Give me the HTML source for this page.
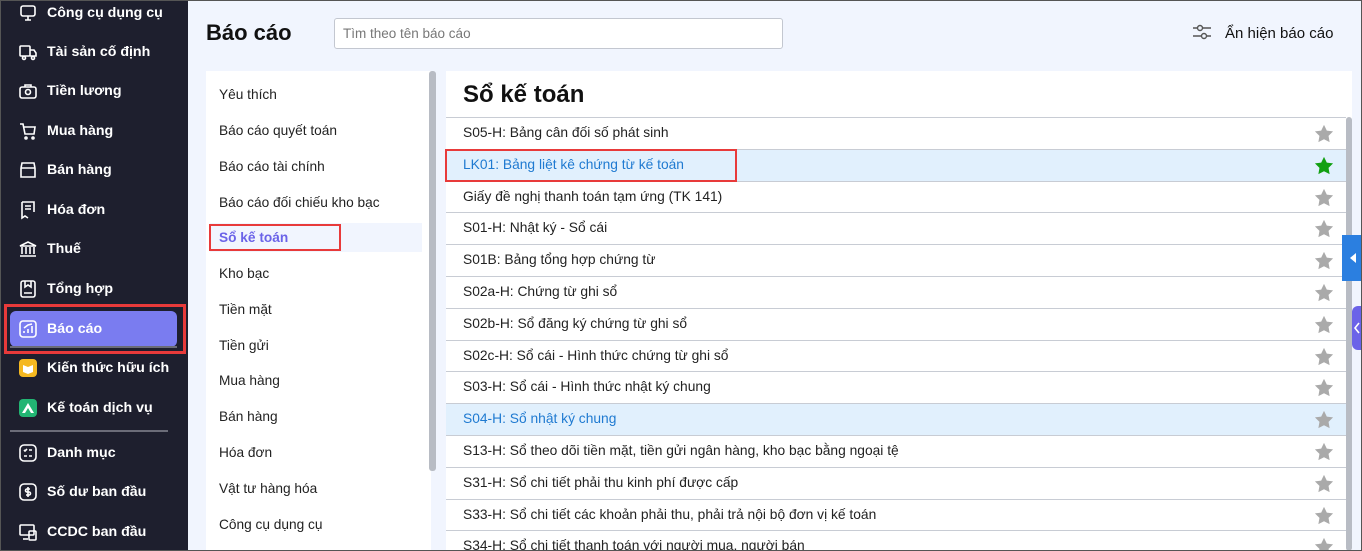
<!DOCTYPE html>
<html style="overflow:hidden"><head><meta charset="utf-8"><style>
*{box-sizing:border-box;margin:0;padding:0}
html,body{width:1362px;height:551px;overflow:hidden}
body{background:#f1f5fe;font-family:"Liberation Sans",sans-serif;position:relative}
.sb{position:absolute;left:0;top:0;width:188px;height:551px;background:#1e1f2e;color:#fff}
.it{position:absolute;left:18px;height:24px;display:flex;align-items:center;font-size:14.2px;font-weight:bold}
.it svg{width:20px;height:20px;margin-right:9px;flex:none}
.act{position:absolute;left:10px;top:311px;width:167px;height:36px;background:#7a7cf0;border-radius:6px}
.sep{position:absolute;height:2px;background:#6b6c78}
.lp{position:absolute;left:206px;top:71px;width:225px;height:480px;background:#fff}
.lp div{position:absolute;left:13px;font-size:13.7px;color:#222}
.rp{position:absolute;left:446px;top:71px;width:906px;height:480px;background:#fff}
.row{position:absolute;left:0;width:900px;height:32px;border-top:1px solid #c8ccd4;font-size:13.8px;color:#222;padding:7px 0 0 17px}
.row.h{background:#e1f0fd;color:#1f7ad1}
.row svg{position:absolute;right:12px;top:6px}
</style></head><body>
<div class="sb">
<div class="act"></div>
<div style="position:absolute;left:4px;top:304px;width:182px;height:50px;border:3px solid #e83a3a"></div>
<div class="sep" style="left:10px;top:346px;width:167px"></div>
<div class="sep" style="left:10px;top:430px;width:158px"></div>
<div class="it" style="top:1px"><svg viewBox="0 0 20 20" fill="none" stroke="#fff" stroke-width="1.6"><rect x="3" y="3" width="14" height="10" rx="2"/><path d="M10 13v4M7 17h6"/></svg>Công cụ dụng cụ</div>
<div class="it" style="top:40px"><svg viewBox="0 0 20 20" fill="none" stroke="#fff" stroke-width="1.6"><rect x="2" y="4" width="10" height="10" rx="1"/><path d="M12 8h4l2 3v3h-6"/><circle cx="6" cy="16" r="1.5"/><circle cx="15" cy="16" r="1.5"/></svg>Tài sản cố định</div>
<div class="it" style="top:79px"><svg viewBox="0 0 20 20" fill="none" stroke="#fff" stroke-width="1.6"><rect x="2" y="6" width="16" height="11" rx="2"/><path d="M7 6V4h6v2"/><circle cx="10" cy="11" r="2.5"/></svg>Tiền lương</div>
<div class="it" style="top:119px"><svg viewBox="0 0 20 20" fill="none" stroke="#fff" stroke-width="1.6"><path d="M2 3h3l2 10h9l1-7H6"/><circle cx="8" cy="17" r="1"/><circle cx="15" cy="17" r="1"/></svg>Mua hàng</div>
<div class="it" style="top:158px"><svg viewBox="0 0 20 20" fill="none" stroke="#fff" stroke-width="1.6"><path d="M3 8l1-5h12l1 5M3 8v9h14V8M3 8h14"/></svg>Bán hàng</div>
<div class="it" style="top:198px"><svg viewBox="0 0 20 20" fill="none" stroke="#fff" stroke-width="1.6"><path d="M4 2h12v10M4 2v16l3-2 3 2M7 6h6M7 9h6"/></svg>Hóa đơn</div>
<div class="it" style="top:237px"><svg viewBox="0 0 20 20" fill="none" stroke="#fff" stroke-width="1.6"><path d="M2 7l8-4 8 4zM4 8v7M8 8v7M12 8v7M16 8v7M2 17h16"/></svg>Thuế</div>
<div class="it" style="top:277px"><svg viewBox="0 0 20 20" fill="none" stroke="#fff" stroke-width="1.6"><rect x="3" y="2" width="14" height="16" rx="2"/><path d="M7 2v6l3-2 3 2V2M6 14h8"/></svg>Tổng hợp</div>
<div class="it" style="top:317px"><svg viewBox="0 0 20 20" fill="none" stroke="#fff" stroke-width="1.6"><rect x="2" y="2" width="16" height="16" rx="3"/><path d="M6 14v-2M10 14v-4M14 14V7M6 9l4-3 4-1"/></svg>Báo cáo</div>
<div class="it" style="top:356px"><svg viewBox="0 0 20 20"><rect x="1" y="1" width="18" height="18" rx="4" fill="#f5b820"/><path d="M5 7l5 2 5-2v7l-5 2-5-2z" fill="#fff"/></svg>Kiến thức hữu ích</div>
<div class="it" style="top:396px"><svg viewBox="0 0 20 20"><rect x="1" y="1" width="18" height="18" rx="4" fill="#22b573"/><path d="M4 15l6-10 6 10h-3l-3-5-3 5z" fill="#fff"/></svg>Kế toán dịch vụ</div>
<div class="it" style="top:441px"><svg viewBox="0 0 20 20" fill="none" stroke="#fff" stroke-width="1.6"><rect x="2" y="2" width="16" height="16" rx="4"/><path d="M6 7l1 1 2-2M11 7h3M6 13h3M11 13h3"/></svg>Danh mục</div>
<div class="it" style="top:480px"><svg viewBox="0 0 20 20" fill="none" stroke="#fff" stroke-width="1.6"><rect x="2" y="2" width="16" height="16" rx="4"/><path d="M12 7h-3a1.5 1.5 0 000 3h2a1.5 1.5 0 010 3H8M10 5v10"/></svg>Số dư ban đầu</div>
<div class="it" style="top:520px"><svg viewBox="0 0 20 20" fill="none" stroke="#fff" stroke-width="1.6"><rect x="2" y="3" width="14" height="10" rx="1"/><rect x="11" y="9" width="7" height="9" rx="1"/><path d="M5 17h5"/></svg>CCDC ban đầu</div>
</div>

<div style="position:absolute;left:206px;top:20px;font-size:22px;font-weight:bold;color:#111">Báo cáo</div>
<div style="position:absolute;left:334px;top:18px;width:449px;height:31px;background:#fff;border:1px solid #c3c7d0;border-radius:3px;font-size:13.5px;color:#777;padding:7px 8px">Tìm theo tên báo cáo</div>
<svg style="position:absolute;left:1192px;top:24px" width="20" height="16" viewBox="0 0 20 16" fill="none" stroke="#555" stroke-width="1.4"><path d="M1 4h4M11 4h8M1 12h8M15 12h4"/><circle cx="8" cy="4" r="2.5"/><circle cx="12" cy="12" r="2.5"/></svg>
<div style="position:absolute;left:1225px;top:25px;font-size:15px;color:#111">Ẩn hiện báo cáo</div>

<div class="lp">
<div style="top:16px">Yêu thích</div>
<div style="top:52px">Báo cáo quyết toán</div>
<div style="top:88px">Báo cáo tài chính</div>
<div style="top:124px">Báo cáo đối chiếu kho bạc</div>
<div style="left:4px;top:152px;width:212px;height:29px;background:#f1f5fe"></div>
<div style="left:3px;top:153px;width:132px;height:27px;border:2px solid #e83a3a"></div>
<div style="top:159px;font-weight:bold;color:#6b63e8">Sổ kế toán</div>
<div style="top:195px">Kho bạc</div>
<div style="top:231px">Tiền mặt</div>
<div style="top:267px">Tiền gửi</div>
<div style="top:302px">Mua hàng</div>
<div style="top:338px">Bán hàng</div>
<div style="top:374px">Hóa đơn</div>
<div style="top:410px">Vật tư hàng hóa</div>
<div style="top:446px">Công cụ dụng cụ</div>
<div style="left:223px;top:0;width:7px;height:400px;background:#b8bcc4;border-radius:3px"></div>
</div>

<div class="rp">
<div style="position:absolute;left:17px;top:10px;font-size:24px;font-weight:bold;color:#111">Sổ kế toán</div>
<div style="position:absolute;left:900px;top:46px;width:6px;height:434px;background:#b8bcc4;border-radius:3px"></div>
</div>
<div id="rows" style="position:absolute;left:446px;top:117px"></div>
<div style="position:absolute;left:445px;top:149px;width:292px;height:33px;border:2px solid #e83a3a"></div>
<div style="position:absolute;left:1342px;top:235px;width:20px;height:46px;background:#2b7fe0"></div>
<svg style="position:absolute;left:1350px;top:253px" width="6" height="10"><path d="M6 0v10L0 5z" fill="#fff"/></svg>
<div style="position:absolute;left:1352px;top:306px;width:10px;height:44px;background:#6b63e8;border-radius:6px 0 0 6px"></div>
<svg style="position:absolute;left:1353px;top:321px" width="8" height="14"><path d="M6 2L2 7l4 5" stroke="#fff" stroke-width="1.6" fill="none"/></svg>
<div style="position:absolute;left:0;top:0;width:1362px;height:551px;border:1px solid #555;pointer-events:none"></div>
<script>
var r=["S05-H: Bảng cân đối số phát sinh","LK01: Bảng liệt kê chứng từ kế toán","Giấy đề nghị thanh toán tạm ứng (TK 141)","S01-H: Nhật ký - Sổ cái","S01B: Bảng tổng hợp chứng từ","S02a-H: Chứng từ ghi sổ","S02b-H: Sổ đăng ký chứng từ ghi sổ","S02c-H: Sổ cái - Hình thức chứng từ ghi sổ","S03-H: Sổ cái - Hình thức nhật ký chung","S04-H: Sổ nhật ký chung","S13-H: Sổ theo dõi tiền mặt, tiền gửi ngân hàng, kho bạc bằng ngoại tệ","S31-H: Sổ chi tiết phải thu kinh phí được cấp","S33-H: Sổ chi tiết các khoản phải thu, phải trả nội bộ đơn vị kế toán","S34-H: Sổ chi tiết thanh toán với người mua, người bán"];
var h="";r.forEach(function(t,i){var hl=(i==1||i==9);var c=i==1?"#12a012":"#aaa";h+='<div class="row'+(hl?' h':'')+'" style="top:'+(i*31.8)+'px">'+t+'<svg width="20" height="19" viewBox="0 0 24 23"><path d="M12 1l3.4 7 7.6 1-5.5 5.3 1.3 7.7L12 18.4 5.2 22l1.3-7.7L1 9l7.6-1z" fill="'+c+'"/></svg></div>'});
document.getElementById("rows").innerHTML=h;
</script>
</body></html>
